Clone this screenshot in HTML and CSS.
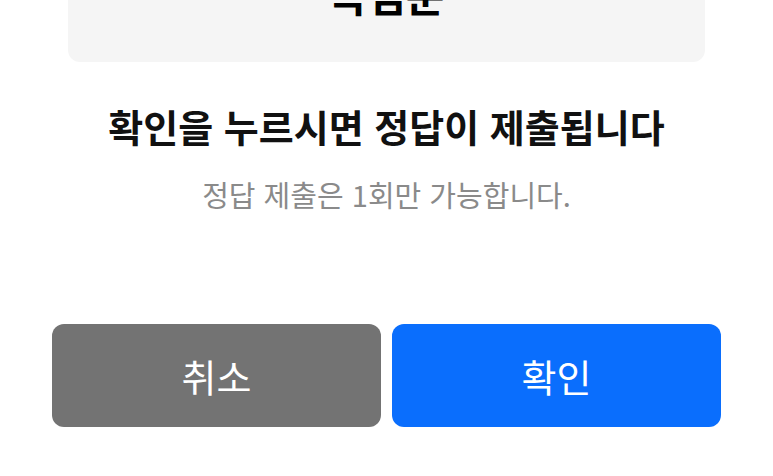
FILE: index.html
```html
<!DOCTYPE html>
<html lang="ko">
<head>
<meta charset="utf-8">
<link rel="stylesheet" href="styles.css">
</head>
<body>
<div class="dialog">
  <div class="answer-box"><span class="answer-text">득점순</span></div>
  <h1 class="title">확인을 누르시면 정답이 제출됩니다</h1>
  <p class="subtitle">정답 제출은 1회만 가능합니다.</p>
  <div class="actions">
    <button class="btn btn-cancel">취소</button>
    <button class="btn btn-confirm">확인</button>
  </div>
</div>
</body>
</html>
```
FILE: styles.css
```css
html, body {
  margin: 0;
  padding: 0;
  background: #ffffff;
}
body {
  font-family: "Noto Sans CJK KR", "Noto Sans", sans-serif;
  width: 773px;
  height: 476px;
  overflow: hidden;
}
.dialog {
  display: flex;
  flex-direction: column;
}
.answer-box {
  margin: 0 68px;
  height: 62px;
  box-sizing: border-box;
  padding-bottom: 47px;
  background: #f5f5f5;
  border-radius: 0 0 12px 12px;
  display: flex;
  justify-content: center;
  align-items: flex-end;
}
.answer-text {
  font-size: 42px;
  line-height: 42px;
  font-weight: 700;
  color: #000;
}
.title {
  margin: 42px 0 0;
  font-size: 38px;
  line-height: 44px;
  font-weight: 700;
  color: #111;
  text-align: center;
}
.subtitle {
  margin: 28px 0 0;
  font-size: 29px;
  line-height: 36px;
  font-weight: 400;
  color: #8a8a8a;
  text-align: center;
}
.actions {
  margin-top: 112px;
  padding: 0 52px;
  display: flex;
  gap: 11px;
}
.btn {
  flex: 1;
  height: 103px;
  border: none;
  border-radius: 12px;
  font-family: inherit;
  font-size: 38px;
  color: #fff;
  padding: 0;
}
.btn-cancel {
  background: #737373;
}
.btn-confirm {
  background: #0a6efd;
}
```
